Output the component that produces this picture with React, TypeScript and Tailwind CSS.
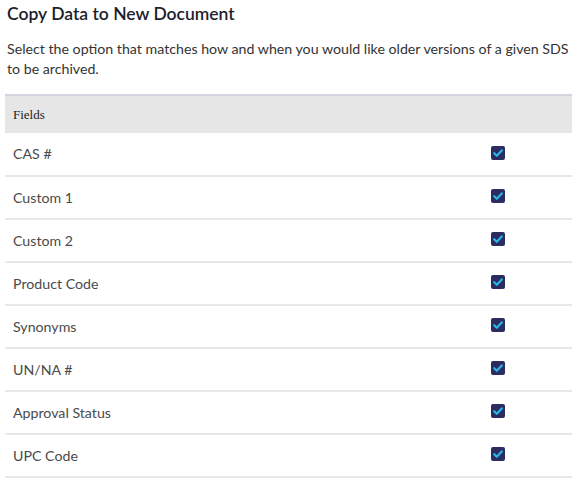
const fields = [
  "CAS #",
  "Custom 1",
  "Custom 2",
  "Product Code",
  "Synonyms",
  "UN/NA #",
  "Approval Status",
  "UPC Code",
];

function CheckBox() {
  return (
    <span className="flex h-[14px] w-[14px] items-center justify-center rounded-[2px] bg-[#2b2c5f]">
      <svg viewBox="0 0 14 14" className="h-[14px] w-[14px]">
        <path
          d="M3.2 7.2 L5.8 9.8 L10.8 4.4"
          fill="none"
          stroke="#27b7ea"
          strokeWidth="2.2"
          strokeLinecap="round"
          strokeLinejoin="round"
        />
      </svg>
    </span>
  );
}

export default function App() {
  return (
    <div className="min-h-[499px] bg-white px-[5px] pt-[3px] font-['Lato',sans-serif]">
      <h1 className="px-[2px] text-[17.5px] font-semibold leading-[22px] text-[#1d1d2b]">
        Copy Data to New Document
      </h1>
      <p className="mt-[14px] px-[2px] text-[14.2px] leading-[20px] text-[#333]">
        Select the option that matches how and when you would like older versions of a given SDS
        to be archived.
      </p>
      <table className="mt-[15px] w-[567px] border-collapse">
        <thead>
          <tr className="border-t-2 border-[#d4d3de] bg-[#e6e6e6]">
            <th className="h-[38px] px-[8px] text-left font-['Liberation_Serif',serif] text-[13px] font-normal text-[#222]">
              Fields
            </th>
            <th />
          </tr>
        </thead>
        <tbody>
          {fields.map((f) => (
            <tr key={f} className="border-b-2 border-[#e8e8e8]">
              <td className="h-[43px] px-[8px] text-[14.2px] text-[#4a4a4a]">{f}</td>
              <td className="w-[80px] pr-[67px]">
                <div className="-mt-[3px]">
                  <CheckBox />
                </div>
              </td>
            </tr>
          ))}
        </tbody>
      </table>
    </div>
  );
}
